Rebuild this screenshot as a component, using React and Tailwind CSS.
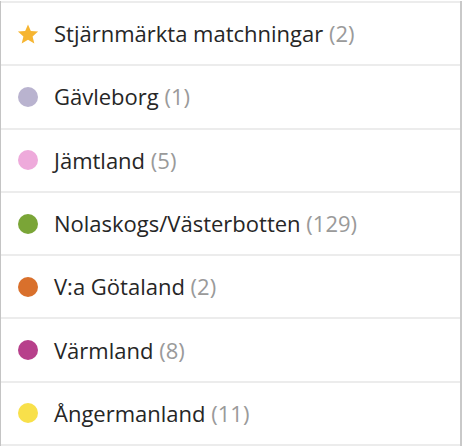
import React from "react";

const rows = [
  { type: "star", label: "Stjärnmärkta matchningar", count: 2 },
  { color: "#b9b3cf", label: "Gävleborg", count: 1 },
  { color: "#eeaadb", label: "Jämtland", count: 5 },
  { color: "#7aa537", label: "Nolaskogs/Västerbotten", count: 129 },
  { color: "#d9702c", label: "V:a Götaland", count: 2 },
  { color: "#b7408b", label: "Värmland", count: 8 },
  { color: "#f8e04a", label: "Ångermanland", count: 11 },
];

function Star() {
  return (
    <svg width="24" height="24" viewBox="0 0 24 24">
      <path
        d="M12 1.5l3.1 7.3 7.9.6-6 5.2 1.9 7.7L12 18.2l-6.9 4.1L7 14.6 1 9.4l7.9-.6z"
        fill="#f6b531"
      />
    </svg>
  );
}

export default function App() {
  return (
    <div
      className="w-[463px] h-[446px] bg-white pt-px"
      style={{ fontFamily: "'Open Sans', 'Noto Sans', sans-serif" }}
    >
      <div className="w-[462px] border-l border-r-2 border-l-[#c4c4c4] border-r-[#c9c9c9]">
        {rows.map((r, i) => (
          <div
            key={i}
            className="h-[63.3px] border-t-2 border-[#ececec] flex items-center pl-[16px]"
          >
            <div className="w-[22px] flex justify-center">
              {r.type === "star" ? (
                <Star />
              ) : (
                <span
                  className="block w-[20px] h-[20px] rounded-full"
                  style={{ backgroundColor: r.color }}
                />
              )}
            </div>
            <span className="ml-[15px] text-[22px] text-[#262626]">
              {r.label} <span className="text-[#9a9a9a]">({r.count})</span>
            </span>
          </div>
        ))}
        <div className="border-t-2 border-[#ececec]" />
      </div>
    </div>
  );
}
